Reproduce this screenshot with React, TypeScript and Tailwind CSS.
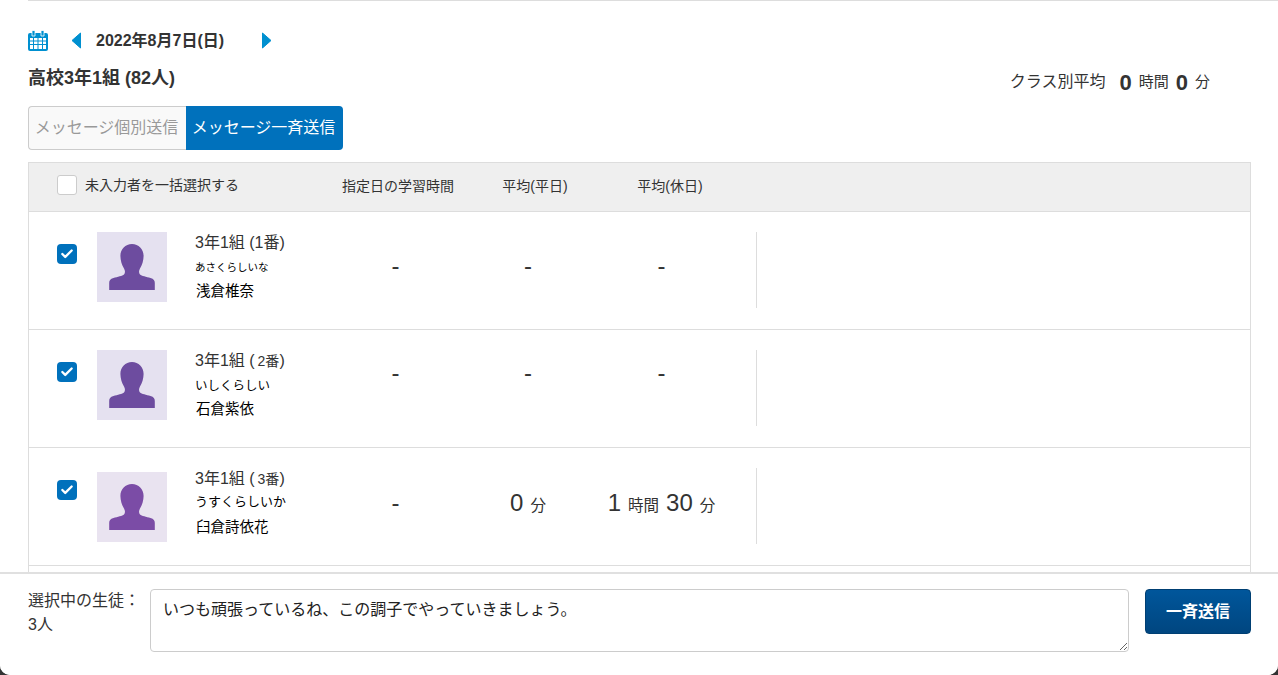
import { Check } from 'lucide-react';

interface Student {
  no: string;
  noClass: string;
  kana: string;
  kanaClass: string;
  name: string;
  photoClass: string;
  figureColor: string;
  valueClass: string;
  weekday: React.ReactNode;
  holiday: React.ReactNode;
}

const fontStack = "font-['Liberation_Sans','Noto_Sans_CJK_JP',sans-serif]";

function Num({ n, unit }: { n: string; unit: string }) {
  return (
    <>
      <span className="text-[24px] leading-none">{n}</span>
      <span className="text-[15.5px] leading-none ml-[7px]">{unit}</span>
    </>
  );
}

const students: Student[] = [
  {
    no: '1番',
    noClass: 'text-[16px]',
    kana: 'あさくらしいな',
    kanaClass: 'text-[10.5px]',
    name: '浅倉椎奈',
    photoClass: 'mt-0 bg-[#e5e1f0]',
    figureColor: '#6d4c9f',
    valueClass: 'pt-[19px]',
    weekday: '-',
    holiday: '-'
  },
  {
    no: '2番',
    noClass: 'text-[14px] pl-[3px]',
    kana: 'いしくらしい',
    kanaClass: 'text-[12.5px] translate-y-[1px]',
    name: '石倉紫依',
    photoClass: 'mt-0 bg-[#e5e1f0]',
    figureColor: '#6d4c9f',
    valueClass: 'pt-[8px]',
    weekday: '-',
    holiday: '-'
  },
  {
    no: '3番',
    noClass: 'text-[14px] pl-[3px]',
    kana: 'うすくらしいか',
    kanaClass: 'text-[13px] -translate-y-[1px]',
    name: '臼倉詩依花',
    photoClass: 'mt-[4px] bg-[#e9e3f0]',
    figureColor: '#7b4ca6',
    valueClass: 'pt-[20px]',
    weekday: <Num n="0" unit="分" />,
    holiday: (
      <>
        <Num n="1" unit="時間" />
        <span className="ml-[7px]" />
        <Num n="30" unit="分" />
      </>
    )
  }
];

function Avatar({ className, color }: { className: string; color: string }) {
  return (
    <div className={`w-[70px] h-[70px] shrink-0 flex items-center justify-center ${className}`}>
      <svg width="48" height="48" viewBox="0 0 48 48">
        <path
          fill={color}
          d="M24 1c-6.600 0-11.600 5-11.600 12 0 4.500 1.500 9 3.600 12.500 1.300 2.200 1.300 4.500 0 6-1.500 1.500-6.500 2.300-10.500 3.500-3.300 1-4.300 2.500-4.300 5v7h45.600v-7c0-2.500-1-4-4.300-5-4-1.200-9-2-10.500-3.500-1.300-1.500-1.300-3.800 0-6 2.100-3.500 3.600-8 3.600-12.500 0-7-5-12-11.600-12z"
        />
      </svg>
    </div>
  );
}

function CheckBox() {
  return (
    <div className="w-5 h-5 rounded-[4px] bg-[#0071bc] flex items-center justify-center">
      <Check size={14} strokeWidth={4} className="text-white" />
    </div>
  );
}

function StudentRow({ s }: { s: Student }) {
  return (
    <div className="flex h-[118px] border-b border-[#dddddd] pt-5 pl-7">
      <div className="w-10 pt-[12px] shrink-0">
        <CheckBox />
      </div>
      <Avatar className={s.photoClass} color={s.figureColor} />
      <div className="w-[166px] pl-[28px] pt-[1px] shrink-0">
        <p className="text-[16px] leading-5 text-[#333333] whitespace-nowrap">
          3年1組 (<span className={s.noClass}>{s.no}</span>)
        </p>
        <p className={`${s.kanaClass} mt-[1px] h-[26px] leading-[26px] text-black`}>{s.kana}</p>
        <p className="text-[14.5px] mt-[1px] pl-[1px] leading-5 text-black whitespace-nowrap">{s.name}</p>
      </div>
      <div className={`w-[125px] text-center text-[24px] leading-[30px] text-[#333333] ${s.valueClass}`}>-</div>
      <div className={`w-[140px] text-center text-[24px] leading-[30px] text-[#333333] ${s.valueClass}`}>{s.weekday}</div>
      <div className={`w-[127px] text-center text-[24px] leading-[30px] text-[#333333] whitespace-nowrap ${s.valueClass}`}>{s.holiday}</div>
      <div className="w-px h-[76px] bg-[#dddddd] ml-[31px]" />
    </div>
  );
}

export default function App() {
  return (
    <div className={`relative h-[675px] w-full overflow-hidden bg-[#333333] ${fontStack}`}>
      <div className="h-full flex flex-col bg-white rounded-b-[10px] overflow-hidden">
        <main className="flex-1 min-h-0 overflow-hidden pl-7 pr-[27px]">
          <div className="h-px bg-[#dddddd] -mr-[27px]" />

          {/* Date selector */}
          <div className="flex items-center h-[22px] mt-[28px]">
            <svg width="20" height="21" viewBox="0 0 20 21" className="mr-[23px]">
              <rect x="0" y="3" width="20" height="18" rx="2" fill="#0090d0" />
              <path d="M4 0.500h3v5.500h-3zM13 0.500h3v5.500h-3z" fill="#0090d0" stroke="#ffffff" strokeWidth="0.800" />
              <path
                d="M2 8h3v2.500h-3zM6 8h3.500v2.500h-3.500zM10.500 8h3.500v2.500h-3.500zM15 8h3v2.500h-3zM2 11.500h3v2.500h-3zM6 11.500h3.500v2.500h-3.500zM10.500 11.500h3.500v2.500h-3.500zM15 11.500h3v2.500h-3zM2 15h3v4h-3zM6 15h3.500v4h-3.500zM10.500 15h3.500v4h-3.500zM15 15h3v4h-3z"
                fill="#ffffff"
              />
            </svg>
            <svg width="10" height="17" viewBox="0 0 10 17">
              <path d="M9.500 1v15L1 8.500z" fill="#0090d0" stroke="#0090d0" strokeLinejoin="round" />
            </svg>
            <span className="ml-[15px] w-[166px] pt-[1px] text-[16px] font-bold text-[#333333]">2022年8月7日(日)</span>
            <svg width="10" height="17" viewBox="0 0 10 17">
              <path d="M0.500 1v15L9 8.500z" fill="#0090d0" stroke="#0090d0" strokeLinejoin="round" />
            </svg>
          </div>

          {/* Class heading */}
          <div className="flex justify-between mt-[10px] h-[34px]">
            <h2 className="text-[18px] font-bold leading-[34px] text-[#333333]">高校3年1組 (82人)</h2>
            <div className="flex items-center h-[42px] mr-[41px] text-[15px] text-[#333333]">
              <span className="mr-[14px] text-[16px]">クラス別平均</span>
              <span className="text-[22px] font-bold">0</span>
              <span className="mx-[7px]">時間</span>
              <span className="text-[22px] font-bold">0</span>
              <span className="ml-[7px]">分</span>
            </div>
          </div>

          {/* Send mode tabs */}
          <div className="flex mt-[11px] h-11 text-[16px]">
            <div className="w-[158px] flex items-center justify-center pr-[2px] bg-[#f9f9f9] border border-r-0 border-[#cccccc] rounded-l-[4px] text-[#999999] whitespace-nowrap">
              メッセージ個別送信
            </div>
            <div className="w-[157px] flex items-center justify-center pr-[2px] bg-[#0071bc] rounded-r-[4px] text-white whitespace-nowrap">
              メッセージ一斉送信
            </div>
          </div>

          {/* Table */}
          <div className="mt-3 border-x border-t border-[#dddddd]">
            <div className="flex h-[49px] bg-[#efefef] border-b border-[#dddddd] pl-7 text-[14px] text-[#333333]">
              <div className="flex items-center w-[285px] shrink-0 pb-[4px]">
                <span className="w-5 h-5 rounded-[3px] bg-white border border-[#cccccc] mr-2" />
                未入力者を一括選択する
              </div>
              <div className="w-[126px] pt-[13px] whitespace-nowrap">指定日の学習時間</div>
              <div className="w-[134px] pt-[13px] text-center">平均(平日)</div>
              <div className="w-[136px] pt-[13px] text-center">平均(休日)</div>
            </div>
            {students.map((s) => (
              <StudentRow key={s.no} s={s} />
            ))}
            <div className="h-20" />
          </div>
        </main>

        {/* Bulk send bar */}
        <footer className="h-[103px] shrink-0 flex bg-white border-t-2 border-[#e0e0e0] pl-7 pr-[27px] pt-[15px]">
          <div className="w-[122px] text-[16px] leading-6 text-[#333333] whitespace-nowrap">
            <p>選択中の生徒：</p>
            <p>3人</p>
          </div>
          <textarea
            className="w-[979px] h-[63px] border border-[#cccccc] rounded-[4px] px-3 py-[10px] text-[16px] leading-5 text-[#222222] outline-none"
            defaultValue="いつも頑張っているね、この調子でやっていきましょう。"
          />
          <button className="ml-4 w-[106px] h-[45px] rounded-[4px] border border-[#003f73] bg-gradient-to-b from-[#00569b] to-[#004680] text-[16px] font-bold text-white">
            一斉送信
          </button>
        </footer>
      </div>
    </div>
  );
}
